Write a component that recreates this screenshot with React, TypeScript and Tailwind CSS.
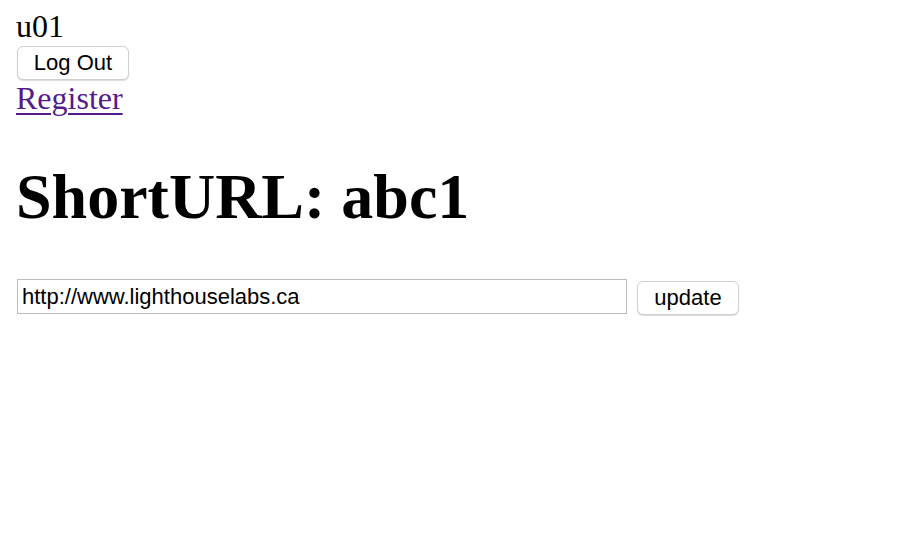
import React from 'react';

const App = () => {
  return (
    <div className="min-h-screen bg-white px-4 pt-2 font-['Liberation_Serif',serif] text-[32px] text-black">
      <div className="leading-[36px]">u01</div>

      <form className="flex pt-[2px]" onSubmit={(e) => e.preventDefault()}>
        <button
          type="submit"
          className="h-[34px] w-[112px] ml-px rounded-[6px] border border-[#cfcfcf] bg-white font-['Liberation_Sans',sans-serif] text-[22px] leading-none text-black shadow-[0_1px_1px_rgba(0,0,0,0.15)]"
        >
          Log Out
        </button>
      </form>

      <div className="leading-[36px]">
        <a href="#" className="text-[#551a8b] underline decoration-2 underline-offset-[4px]">
          Register
        </a>
      </div>

      <h1 className="mt-[44px] text-[64px] font-bold leading-[74px]">ShortURL: abc1</h1>

      <form className="mt-[45px] flex items-start gap-[10px]" onSubmit={(e) => e.preventDefault()}>
        <input
          type="text"
          defaultValue="http://www.lighthouselabs.ca"
          className="ml-px h-[35px] w-[610px] border border-[#bdbdbd] px-[4px] font-['Liberation_Sans',sans-serif] text-[22px] text-black outline-none"
        />
        <button
          type="submit"
          className="mt-[2px] h-[34px] w-[102px] rounded-[6px] border border-[#cfcfcf] bg-white font-['Liberation_Sans',sans-serif] text-[22px] leading-none text-black shadow-[0_1px_1px_rgba(0,0,0,0.15)]"
        >
          update
        </button>
      </form>
    </div>
  );
};

export default App;
